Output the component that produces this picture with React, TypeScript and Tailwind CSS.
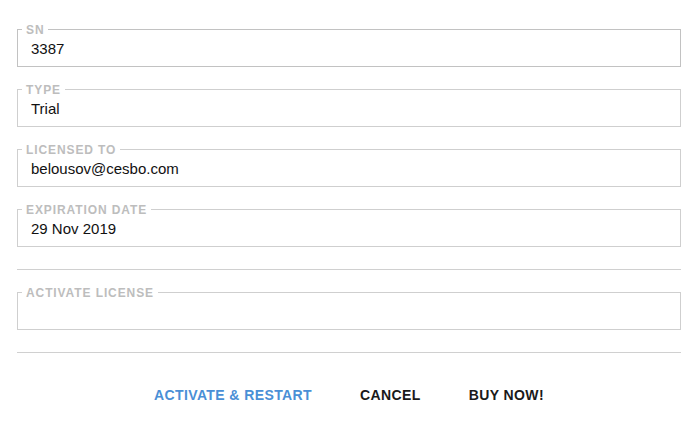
const fields = [
  { label: "SN", value: "3387", focused: true },
  { label: "Type", value: "Trial" },
  { label: "Licensed to", value: "belousov@cesbo.com" },
  { label: "Expiration date", value: "29 Nov 2019" },
];

function Field({
  label,
  value,
  focused,
}: {
  label: string;
  value: string;
  focused?: boolean;
}) {
  return (
    <fieldset
      className={`border pl-[13px] pr-3 pb-[5px] ${
        focused ? "border-[#c2c2c2]" : "border-[#cfcfcf]"
      }`}
    >
      <legend className="ml-[-9px] px-[4px] pt-[2px] text-[12px] leading-[14px] font-bold uppercase tracking-[0.9px] text-[#bdbdbd]">
        {label}
      </legend>
      <div className="h-[24px] text-[15px] leading-[24px] text-[#111]">
        {value}
      </div>
    </fieldset>
  );
}

export default function App() {
  return (
    <div className="w-[700px] h-[442px] bg-white pt-[21px] pl-[17px] pr-[19px] font-['Liberation_Sans',Arial,sans-serif]">
      <div className="flex flex-col gap-[14px]">
        {fields.map((f) => (
          <Field key={f.label} {...f} />
        ))}
      </div>

      <div className="mt-[22px] h-px bg-[#d0d0d0]" />

      <div className="mt-[14px]">
        <Field label="Activate license" value="" />
      </div>

      <div className="mt-[22px] h-px bg-[#d0d0d0]" />

      <div className="mt-[32px] flex justify-center text-[14px] leading-[20px] font-bold tracking-[0.4px]">
        <button className="px-6 uppercase text-[#4a8fd6] cursor-pointer">
          Activate &amp; Restart
        </button>
        <button className="px-6 uppercase text-[#1a1a1a] cursor-pointer">
          Cancel
        </button>
        <button className="px-6 uppercase text-[#1a1a1a] cursor-pointer">
          Buy now!
        </button>
      </div>
    </div>
  );
}
